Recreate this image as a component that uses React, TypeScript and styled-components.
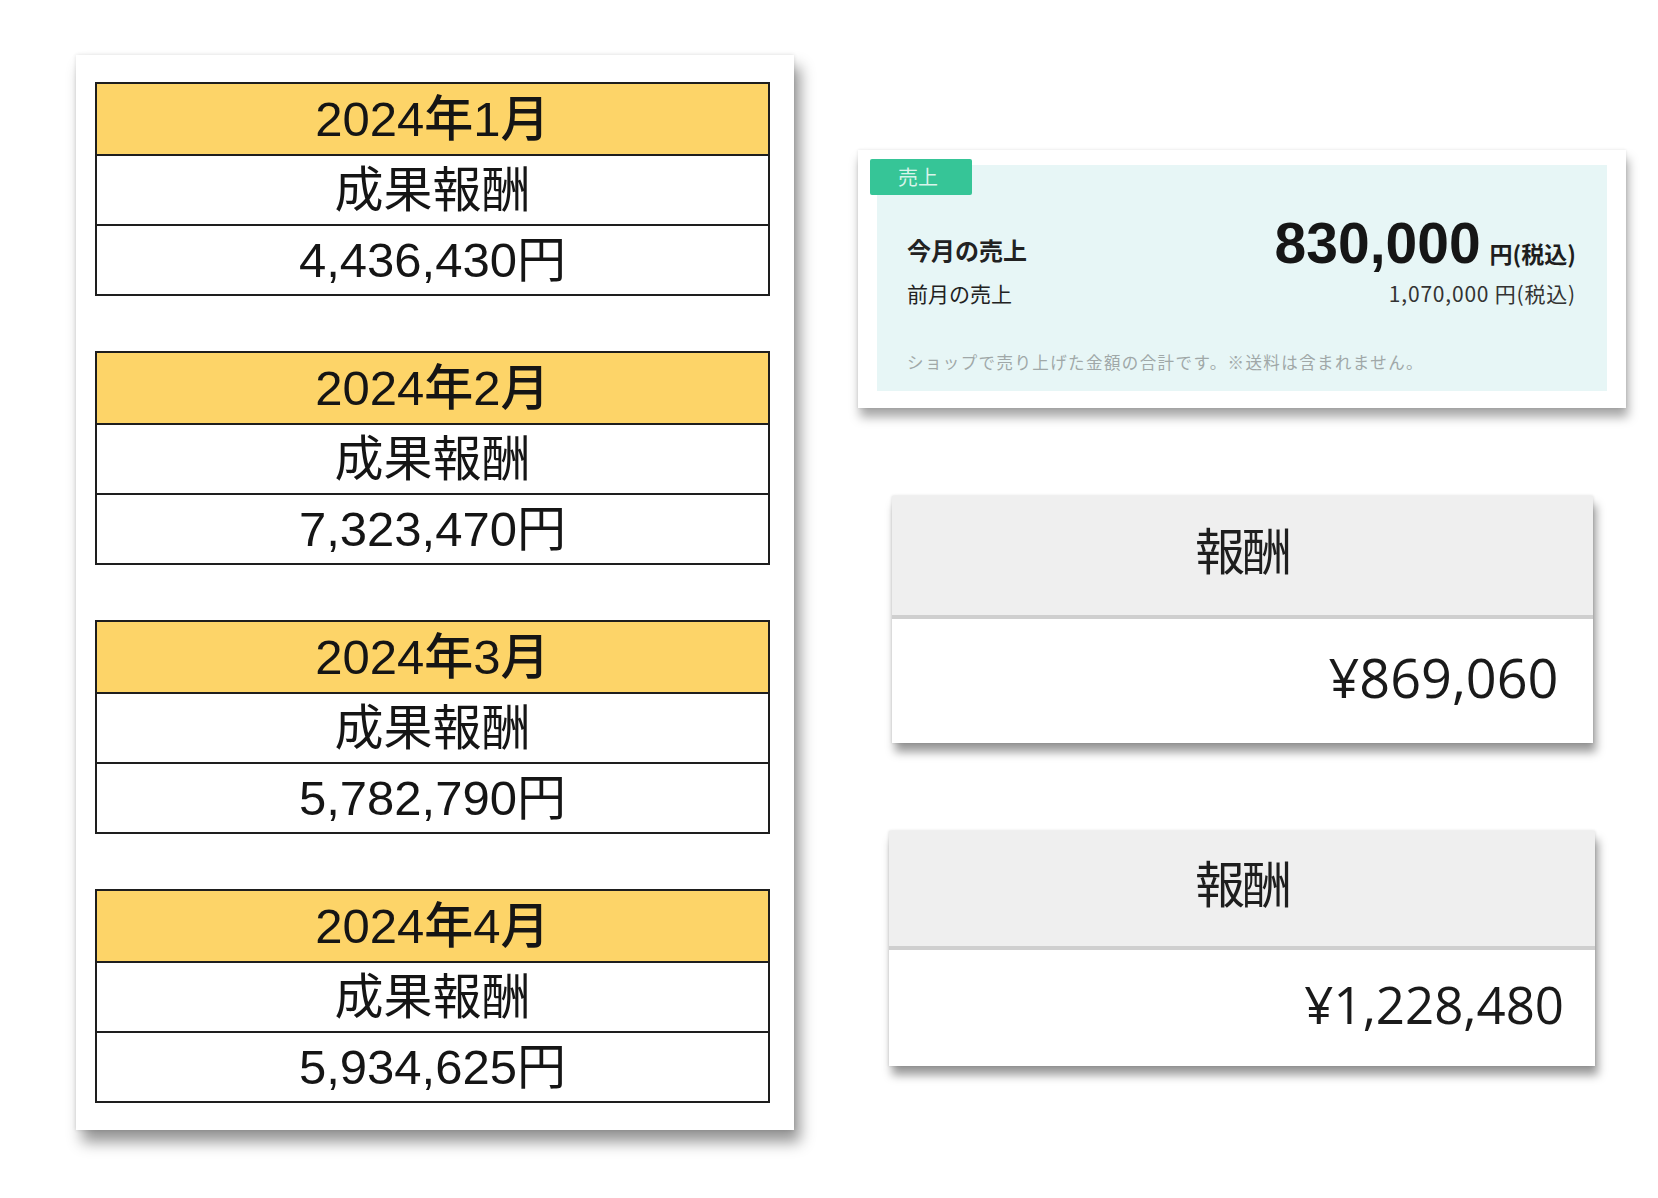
import styled, { createGlobalStyle } from 'styled-components';

type MonthlyReward = {
	month: string;
	amount: string;
};

type RewardCardData = {
	amount: string;
	width: number;
	headerHeight: number;
	bodyHeight: number;
	amountSize: number;
	amountRight: number;
};

const monthlyRewards: MonthlyReward[] = [
	{ month: '2024年1月', amount: '4,436,430円' },
	{ month: '2024年2月', amount: '7,323,470円' },
	{ month: '2024年3月', amount: '5,782,790円' },
	{ month: '2024年4月', amount: '5,934,625円' },
];

const rewardCards: RewardCardData[] = [
	{
		amount: '¥869,060',
		width: 701,
		headerHeight: 123,
		bodyHeight: 124,
		amountSize: 54,
		amountRight: 34,
	},
	{
		amount: '¥1,228,480',
		width: 706,
		headerHeight: 119,
		bodyHeight: 116,
		amountSize: 51,
		amountRight: 31,
	},
];

export default function App() {
	return (
		<>
			<GlobalStyle />
			<Page>
				<SheetCard>
					{monthlyRewards.map((reward) => (
						<MonthTable key={reward.month}>
							<MonthHeader>{reward.month}</MonthHeader>
							<MonthCell>成果報酬</MonthCell>
							<MonthCell>{reward.amount}</MonthCell>
						</MonthTable>
					))}
				</SheetCard>

				<RightColumn>
					<SalesCard>
						<SalesInner>
							<SalesTag>売上</SalesTag>
							<SalesMainRow>
								<SalesLabel $bold>今月の売上</SalesLabel>
								<SalesValue>
									<BigAmount>830,000</BigAmount>
									<BigUnit>円(税込)</BigUnit>
								</SalesValue>
							</SalesMainRow>
							<SalesRow>
								<SalesLabel>前月の売上</SalesLabel>
								<SmallAmount>1,070,000 円(税込)</SmallAmount>
							</SalesRow>
							<SalesNote>
								ショップで売り上げた金額の合計です。※送料は含まれません。
							</SalesNote>
						</SalesInner>
					</SalesCard>

					{rewardCards.map((card) => (
						<RewardCard key={card.amount} $width={card.width}>
							<RewardHeader $height={card.headerHeight}>報酬</RewardHeader>
							<RewardBody
								$height={card.bodyHeight}
								$size={card.amountSize}
								$right={card.amountRight}
							>
								{card.amount}
							</RewardBody>
						</RewardCard>
					))}
				</RightColumn>
			</Page>
		</>
	);
}

const GlobalStyle = createGlobalStyle`
	html, body {
		margin: 0;
		padding: 0;
		background: #ffffff;
	}
	body {
		font-family: "Liberation Sans", "Noto Sans CJK JP", sans-serif;
		color: #1c1c1c;
	}
	* {
		box-sizing: border-box;
	}
`;

const Page = styled.div`
	display: flex;
	align-items: flex-start;
	gap: 64px;
	width: 1658px;
	min-height: 1198px;
	padding: 55px 0 0 76px;
`;

const SheetCard = styled.div`
	display: flex;
	flex-direction: column;
	gap: 55px;
	width: 718px;
	padding: 27px 24px 27px 19px;
	background: #ffffff;
	box-shadow:
		0 0 4px rgba(0, 0, 0, 0.12),
		6px 12px 14px rgba(0, 0, 0, 0.42);
`;

const MonthTable = styled.div`
	display: grid;
	grid-template-rows: 70px 70px 70px;
	border: 2px solid #1e1e1e;
`;

const MonthCell = styled.div`
	display: flex;
	align-items: center;
	justify-content: center;
	border-top: 2px solid #1e1e1e;
	background: #ffffff;
	font-family: "Liberation Sans", "Noto Sans CJK JP", sans-serif;
	font-size: 49px;
	line-height: 1;
	color: #151515;
`;

const MonthHeader = styled(MonthCell)`
	border-top: none;
	background: #fdd468;
	font-weight: 500;
`;

const RightColumn = styled.div`
	display: flex;
	flex-direction: column;
	align-items: center;
	gap: 88px;
	width: 768px;
	margin-top: 95px;
`;

const SalesCard = styled.div`
	width: 768px;
	padding: 15px 19px 17px 19px;
	background: #ffffff;
	box-shadow:
		0 0 3px rgba(0, 0, 0, 0.1),
		2px 9px 10px rgba(0, 0, 0, 0.35);
`;

const SalesInner = styled.div`
	position: relative;
	display: flex;
	flex-direction: column;
	height: 226px;
	padding: 50px 31px 0 30px;
	background: #e7f6f6;
	font-family: "Noto Sans CJK JP", sans-serif;
	line-height: 1;
`;

const SalesTag = styled.span`
	position: absolute;
	top: -6px;
	left: -7px;
	display: flex;
	align-items: center;
	width: 102px;
	height: 36px;
	padding-left: 28px;
	background: #36c597;
	font-size: 20px;
	color: rgba(255, 255, 255, 0.82);
	border-radius: 2px;
`;

const SalesMainRow = styled.div`
	display: flex;
	align-items: flex-end;
	justify-content: space-between;

	& > span:first-child {
		margin-bottom: 10px;
	}
`;

const SalesRow = styled.div`
	display: flex;
	align-items: baseline;
	justify-content: space-between;
	margin-top: 11px;
`;

const SalesLabel = styled.span<{ $bold?: boolean }>`
	font-size: ${({ $bold }) => ($bold ? '24px' : '21px')};
	font-weight: ${({ $bold }) => ($bold ? 700 : 400)};
	color: #222222;
`;

const SalesValue = styled.span`
	display: flex;
	align-items: baseline;
	gap: 9px;
`;

const BigAmount = styled.span`
	font-family: "Liberation Sans", sans-serif;
	font-size: 57px;
	font-weight: 700;
	color: #161616;
`;

const BigUnit = styled.span`
	font-size: 23px;
	font-weight: 700;
	color: #1e1e1e;
`;

const SmallAmount = styled.span`
	font-size: 21px;
	letter-spacing: 0.8px;
	color: #333333;
`;

const SalesNote = styled.p`
	margin: 50px 0 0;
	font-size: 16.5px;
	letter-spacing: 1.4px;
	color: #a0a8a8;
`;

const RewardCard = styled.div<{ $width: number }>`
	display: flex;
	flex-direction: column;
	width: ${({ $width }) => $width}px;
	background: #ffffff;
	box-shadow:
		0 0 3px rgba(0, 0, 0, 0.15),
		3px 9px 9px rgba(0, 0, 0, 0.4);
`;

const RewardHeader = styled.div<{ $height: number }>`
	display: flex;
	align-items: center;
	justify-content: center;
	height: ${({ $height }) => $height}px;
	padding-bottom: 16px;
	background: #efefef;
	border-bottom: 4px solid #cfcfcf;
	font-family: "Noto Sans CJK JP", sans-serif;
	font-size: 50px;
	line-height: 1;
	font-weight: 400;
	color: #1e1e1e;
	letter-spacing: -3px;
`;

const RewardBody = styled.div<{ $height: number; $size: number; $right: number }>`
	display: flex;
	align-items: center;
	justify-content: flex-end;
	height: ${({ $height }) => $height}px;
	padding-right: ${({ $right }) => $right}px;
	padding-bottom: 8px;
	font-family: "Open Sans", sans-serif;
	font-size: ${({ $size }) => $size}px;
	line-height: 1;
	color: #1a1a1a;
`;
